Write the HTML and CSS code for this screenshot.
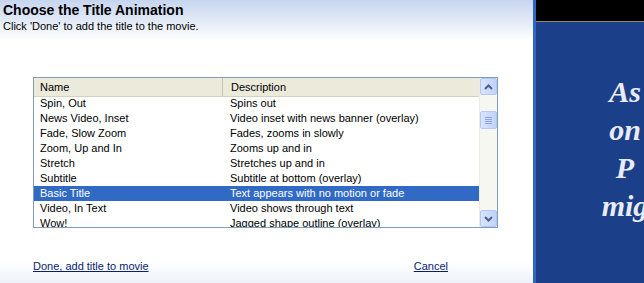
FILE: index.html
```html
<!DOCTYPE html>
<html lang="en">
<head>
  <meta charset="UTF-8" />
  <title>Choose the Title Animation</title>
  <link rel="stylesheet" href="styles.css">
</head>
<body>
  <div class="dialog">
    <h2>Choose the Title Animation</h2>
    <p class="hint">Click 'Done' to add the title to the movie.</p>

    <div class="listbox">
      <div class="list-main">
        <div class="list-head">
          <div class="col-name">Name</div>
          <div class="col-desc">Description</div>
        </div>
        <div class="list-body">
          <div class="row"><span class="col-name">Spin, Out</span><span class="col-desc">Spins out</span></div>
          <div class="row"><span class="col-name">News Video, Inset</span><span class="col-desc">Video inset with news banner (overlay)</span></div>
          <div class="row"><span class="col-name">Fade, Slow Zoom</span><span class="col-desc">Fades, zooms in slowly</span></div>
          <div class="row"><span class="col-name">Zoom, Up and In</span><span class="col-desc">Zooms up and in</span></div>
          <div class="row"><span class="col-name">Stretch</span><span class="col-desc">Stretches up and in</span></div>
          <div class="row"><span class="col-name">Subtitle</span><span class="col-desc">Subtitle at bottom (overlay)</span></div>
          <div class="row selected"><span class="col-name">Basic Title</span><span class="col-desc">Text appears with no motion or fade</span></div>
          <div class="row"><span class="col-name">Video, In Text</span><span class="col-desc">Video shows through text</span></div>
          <div class="row"><span class="col-name">Wow!</span><span class="col-desc">Jagged shape outline (overlay)</span></div>
        </div>
      </div>
      <div class="scrollbar">
        <div class="sb-btn">
          <svg width="9" height="6" viewBox="0 0 9 6"><path d="M1 5 L4.5 1.5 L8 5" fill="none" stroke="#4d6185" stroke-width="2"/></svg>
        </div>
        <div class="sb-track">
          <div class="sb-thumb">
            <svg width="7" height="7" viewBox="0 0 7 7"><path d="M0 .5h7M0 2.5h7M0 4.5h7M0 6.5h7" stroke="#8ca5e0" stroke-width="1"/></svg>
          </div>
        </div>
        <div class="sb-btn">
          <svg width="9" height="6" viewBox="0 0 9 6"><path d="M1 1 L4.5 4.5 L8 1" fill="none" stroke="#4d6185" stroke-width="2"/></svg>
        </div>
      </div>
    </div>

    <div class="actions">
      <a href="#">Done, add title to movie</a>
      <a href="#">Cancel</a>
    </div>
  </div>

  <div class="preview">
    <div class="preview-bar"></div>
    <div class="preview-screen">
      <p>As<br>on<br>P<br>mig</p>
    </div>
  </div>
</body>
</html>
```

FILE: styles.css
```css
body {
  margin: 0;
  width: 644px;
  height: 283px;
  overflow: hidden;
  display: flex;
  font-family: "Liberation Sans", Arial, sans-serif;
  font-size: 11px;
  color: #000;
}
.dialog {
  flex: none;
  width: 533px;
  height: 283px;
  background: linear-gradient(#c6d5ef 0, #e4ebf7 22px, #fff 40px, #fff 262px, #eef2f9 283px);
}
h2 {
  margin: 0;
  padding: 2px 0 0 3px;
  font-size: 14px;
  font-weight: bold;
  line-height: 17px;
}
.hint {
  margin: 0;
  padding-left: 3px;
  line-height: 14px;
}
.listbox {
  display: flex;
  width: 463px;
  height: 149px;
  margin: 44px 0 0 33px;
  border: 1px solid #7f9db9;
  background: #fff;
}
.list-main {
  flex: 1;
  overflow: hidden;
}
.list-head {
  display: flex;
  height: 18px;
  line-height: 18px;
  background: #ebeadb;
  border-bottom: 1px solid #d6d2c2;
}
.list-head .col-name {
  border-right: 1px solid #c7c5b2;
}
.col-name {
  width: 189px;
  padding-left: 6px;
  box-sizing: border-box;
  flex: none;
}
.col-desc {
  padding-left: 8px;
}
.list-body {
  margin-top: -1px;
}
.row {
  display: flex;
  height: 15px;
  line-height: 15px;
  white-space: nowrap;
}
.row .col-name {
  padding-left: 6px;
}
.row .col-desc {
  padding-left: 7px;
}
.row.selected {
  background: #316ac5;
  color: #fff;
}
.scrollbar {
  width: 17px;
  display: flex;
  flex-direction: column;
  background: #f7f7f2;
  border-left: 1px solid #eeede5;
}
.sb-btn, .sb-thumb {
  display: flex;
  align-items: center;
  justify-content: center;
  border: 1px solid #b5c8f3;
  border-radius: 2px;
  background: linear-gradient(90deg, #d8e4fd, #c1d3fb);
}
.sb-btn {
  height: 15px;
}
.sb-track {
  flex: 1;
  padding-top: 16px;
}
.sb-thumb {
  height: 16px;
}
.actions {
  display: flex;
  justify-content: space-between;
  width: 415px;
  margin: 32px 0 0 33px;
}
.actions a {
  color: #0a1e6e;
  text-decoration: underline;
}
.preview {
  flex: none;
  width: 108px;
  display: flex;
  flex-direction: column;
  border-left: 3px solid #3264c2;
  background: #1b3f88;
  overflow: hidden;
}
.preview-bar {
  height: 21px;
  background: #000;
  border-bottom: 1px solid #9a8468;
}
.preview-screen {
  flex: 1;
}
.preview-screen p {
  margin: 51px 0 0 -61px;
  width: 300px;
  text-align: center;
  font-family: "Liberation Serif", "Times New Roman", serif;
  font-style: italic;
  font-weight: bold;
  font-size: 30px;
  line-height: 38px;
  color: #e8ecf6;
}
```
